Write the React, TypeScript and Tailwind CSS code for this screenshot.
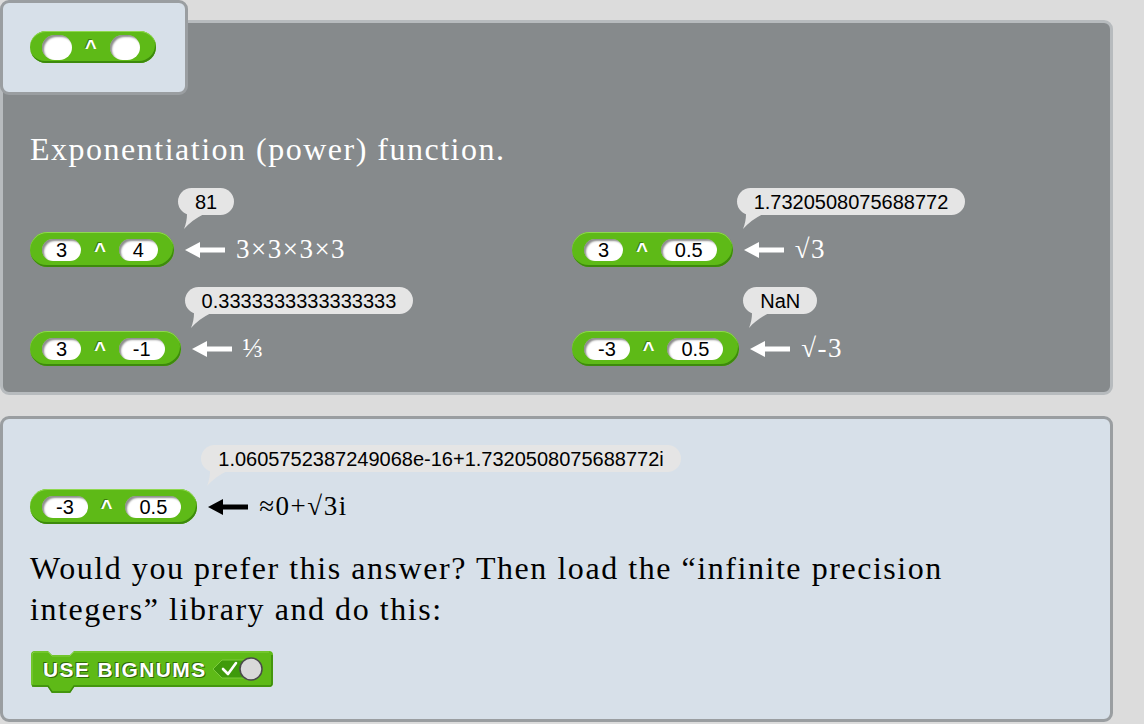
import React from "react";

function Slot({ v, h = 22 }: { v?: string; h?: number }) {
  return (
    <span
      className={`inline-flex ${h === 22 ? "h-[22px]" : "h-[25px]"} min-w-[30px] items-center justify-center rounded-full bg-white px-[14px] font-['Liberation_Sans',Arial,sans-serif] text-[20px] leading-none text-black shadow-[inset_2px_2px_2px_rgba(0,0,0,0.45)]`}
    >
      {v}
    </span>
  );
}

function Reporter({ a, b, big = false }: { a?: string; b?: string; big?: boolean }) {
  return (
    <div
      className={`inline-flex ${big ? "h-[32px]" : "h-[35px]"} shrink-0 items-center rounded-full bg-[#5eba17] pl-[12px] pr-[16px] shadow-[inset_0_1px_0_#8fd84f,inset_-1px_-2px_0_#3d8a0c]`}
    >
      <Slot v={a} h={big ? 25 : 22} />
      <span className="mx-[13px] font-['Liberation_Sans',Arial,sans-serif] text-[20px] font-bold leading-none text-white [text-shadow:-1px_-1px_0_#3d7d10]">
        ^
      </span>
      <Slot v={b} h={big ? 25 : 22} />
    </div>
  );
}

function Bubble({ text }: { text: string }) {
  return (
    <div className="relative inline-flex h-[27px] items-center whitespace-nowrap rounded-full bg-[#e5e5e5] px-[17px] font-['Liberation_Sans',Arial,sans-serif] text-[20px] leading-none text-black">
      {text}
      <svg className="absolute left-0 top-[26px]" width="28" height="18" viewBox="0 0 28 18">
        <path d="M9 0 L26 0 C18 4 11 9 6 15 C8 10 9 5 9 0 Z" fill="#e5e5e5" />
      </svg>
    </div>
  );
}

function Arrow({ color }: { color: string }) {
  return (
    <svg width="40" height="16" viewBox="0 0 40 16" className="shrink-0">
      <polygon points="0,8 15,0 15,5.5 40,5.5 40,10.5 15,10.5 15,16" fill={color} />
    </svg>
  );
}

function Example({
  a,
  b,
  bubble,
  label,
  dark = false,
}: {
  a: string;
  b: string;
  bubble: string;
  label: string;
  dark?: boolean;
}) {
  return (
    <div className="flex items-end">
      <Reporter a={a} b={b} />
      <div className="ml-[4px] flex flex-col items-start">
        <Bubble text={bubble} />
        <div className="mt-[17px] flex h-[35px] items-center pl-[7px]">
          <Arrow color={dark ? "#000000" : "#ffffff"} />
          <span
            className={`ml-[11px] whitespace-nowrap font-['Liberation_Serif',serif] text-[27px] leading-none tracking-[1.5px] ${dark ? "text-black" : "text-white"}`}
          >
            {label}
          </span>
        </div>
      </div>
    </div>
  );
}

function UseBignums() {
  return (
    <div className="relative ml-[1px] mt-[21px] h-[42px] w-[242px]">
      <svg className="absolute inset-0" width="242" height="42" viewBox="0 0 242 42">
        <path
          d="M0 4 Q0 0 4 0 L17 0 L21 4 L39 4 L43 0 L238 0 Q242 0 242 4 L242 32 Q242 36 238 36 L43 36 L39 42 L21 42 L17 36 L4 36 Q0 36 0 32 Z"
          fill="#5eba17"
        />
        <path d="M1 35 L17 35 L21 41 L39 41 L43 35 L239 35 Q241 35 241 32 L241 4" fill="none" stroke="#3d8a0c" strokeWidth="1.5" />
        <path d="M1 33 L1 4 Q1 1 4 1 L17 1 L21 5 L39 5 L43 1 L238 1" fill="none" stroke="#84d043" strokeWidth="1" />
      </svg>
      <div className="relative flex h-[36px] items-center pl-[12px]">
        <span className="font-['Liberation_Sans',Arial,sans-serif] text-[21px] font-bold leading-none tracking-[1.4px] text-white [text-shadow:-1px_-1px_0_#2f6a07,1px_1px_0_#2f6a07]">
          USE BIGNUMS
        </span>
        <svg className="ml-[6px]" width="52" height="26" viewBox="0 0 52 26">
          <polygon points="0,13 9,4 34,4 34,22 9,22" fill="#3f9a0b" stroke="#7ccb3c" strokeWidth="1" />
          <path d="M10 13 L15 18 L23 7" fill="none" stroke="#ffffff" strokeWidth="2.6" strokeLinecap="round" strokeLinejoin="round" />
          <circle cx="38" cy="13" r="11" fill="#d9d9d9" stroke="#4a4a4a" strokeWidth="1.5" />
        </svg>
      </div>
    </div>
  );
}

export default function App() {
  return (
    <div className="relative h-[724px] w-[1144px] overflow-hidden bg-[#dcdcdc] font-['Liberation_Serif',serif]">
      <div className="w-[1113px] pt-[20px]">
        <section className="h-[375px] rounded-[9px] border-[3px] border-[#b7bbbe] bg-[#868a8c] pl-[27px] pt-[106px]">
          <h1 className="h-[40px] whitespace-nowrap text-[32px] leading-[40px] tracking-[1.5px] text-white">
            Exponentiation (power) function.
          </h1>
          <div className="mt-[19px] grid grid-cols-[542px_1fr] gap-y-[20px]">
            <Example a="3" b="4" bubble="81" label="3×3×3×3" />
            <Example a="3" b="0.5" bubble="1.7320508075688772" label="√3" />
            <Example a="3" b="-1" bubble="0.3333333333333333" label="⅓" />
            <Example a="-3" b="0.5" bubble="NaN" label="√-3" />
          </div>
        </section>
        <section className="mt-[21px] h-[306px] rounded-[9px] border-[3px] border-[#9a9ea1] bg-[#d7e0e9] pl-[27px] pt-[26px]">
          <Example a="-3" b="0.5" bubble="1.0605752387249068e-16+1.7320508075688772i" label="≈0+√3i" dark />
          <p className="mt-[24px] text-[32px] leading-[41px] tracking-[1.55px] text-black">
            Would you prefer this answer? Then load the “infinite precision
            <br />
            integers” library and do this:
          </p>
          <UseBignums />
        </section>
      </div>
      <div className="absolute left-0 top-0 h-[95px] w-[188px] rounded-[9px] border-[3px] border-[#9a9ea1] bg-[#d7e0e9] pl-[27px] pt-[28px]">
        <Reporter big />
      </div>
    </div>
  );
}
